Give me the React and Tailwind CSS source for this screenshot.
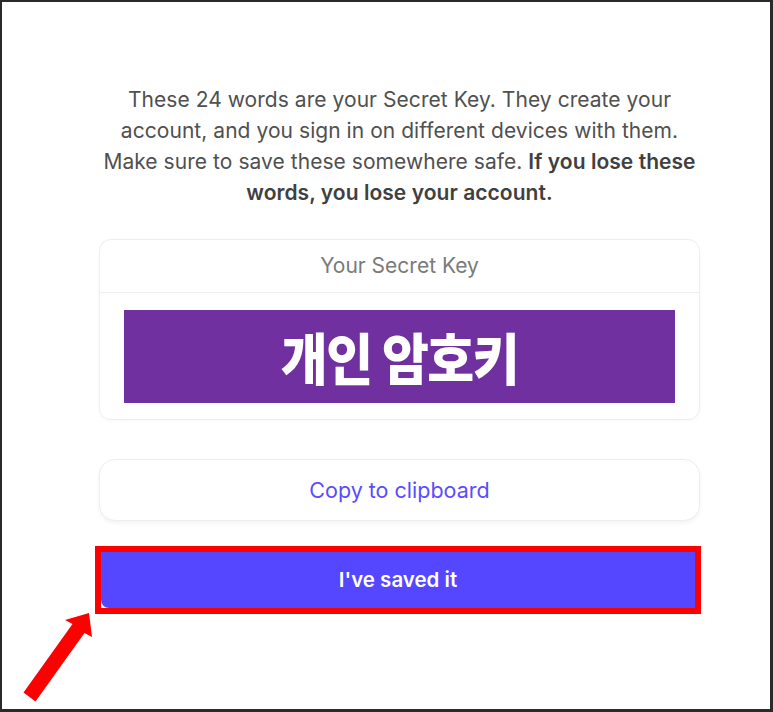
export default function App() {
  return (
    <div className="relative w-[773px] h-[712px] bg-white border-l-2 border-t-2 border-r-[3px] border-b-[3px] border-[#2a2a2a] overflow-hidden font-['Inter','Noto_Sans',sans-serif]">
      <div className="ml-[97px] w-[601px] pt-[82px]">
        {/* Intro */}
        <p className="-mx-4 text-center text-[21px] leading-[31px] text-[#505050] tracking-[0.05px]">
          These 24 words are your Secret Key. They create your
          <br />
          account, and you sign in on different devices with them.
          <br />
          Make sure to save these somewhere safe.{' '}
          <span className="font-semibold text-[#404040]">
            If you lose these
            <br />
            words, you lose your account.
          </span>
        </p>

        {/* Secret key card */}
        <div className="mt-[31px] rounded-xl border border-[#eeeeee] shadow-[0_1px_3px_rgba(0,0,0,0.04)]">
          <div className="h-[53px] flex items-center justify-center border-b border-[#eeeeee] text-[21px] text-[#7a7a7a]">
            Your Secret Key
          </div>
          <div className="px-6 pt-[17px] pb-4">
            <div className="h-[93px] bg-[#7030a0] flex items-center justify-center">
              <span className="text-white text-[51px] font-black leading-none scale-y-110 font-['Noto_Sans_CJK_KR',sans-serif] tracking-[-1.5px]">
                개인 암호키
              </span>
            </div>
          </div>
        </div>

        {/* Copy button */}
        <button className="mt-[39px] w-full h-[62px] rounded-2xl border border-[#eeeeee] bg-white shadow-[0_2px_4px_rgba(0,0,0,0.05)] text-[21.5px] text-[#5a4cff]">
          Copy to clipboard
        </button>

        {/* Saved button with highlight */}
        <div className="mt-[25px] -ml-[4px] w-[606px] h-[68px] border-[6px] border-[#ff0000]">
          <button className="w-full h-full rounded-bl-lg bg-[#5447ff] text-white text-[20.5px] font-semibold">
            I've saved it
          </button>
        </div>
      </div>

      {/* Arrow annotation */}
      <svg className="absolute left-0 top-0" width="773" height="712" viewBox="0 0 773 712">
        <polygon
          points="21.5,690.6 70.5,622.1 63,618 87,611 90,635 82.5,630.9 33.5,699.4"
          fill="#ff0000"
        />
      </svg>
    </div>
  );
}
